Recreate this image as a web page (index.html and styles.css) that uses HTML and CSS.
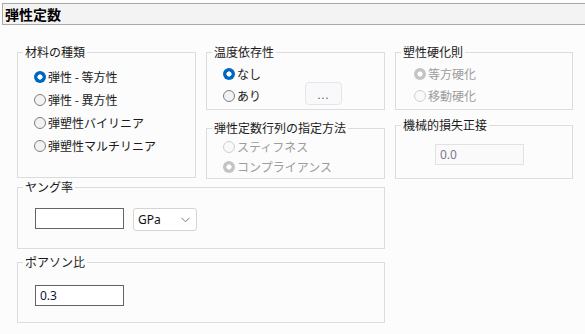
FILE: index.html
```html
<!DOCTYPE html>
<html lang="ja">
<head>
  <meta charset="UTF-8">
  <meta name="viewport" content="width=device-width, initial-scale=1.0">
  <title>弾性定数</title>
  <link rel="stylesheet" href="styles.css">
</head>
<body>
  <div class="title-bar">
    <h1>弾性定数</h1>
  </div>

  <div class="panel">
    <div class="top-row">
      <div class="col">
        <fieldset class="group group-material">
          <legend>材料の種類</legend>
          <div class="options">
            <label class="option"><input type="radio" name="material" checked>弾性 - 等方性</label>
            <label class="option"><input type="radio" name="material">弾性 - 異方性</label>
            <label class="option"><input type="radio" name="material">弾塑性バイリニア</label>
            <label class="option"><input type="radio" name="material">弾塑性マルチリニア</label>
          </div>
        </fieldset>
      </div>

      <div class="col">
        <fieldset class="group group-temp">
          <legend>温度依存性</legend>
          <div class="options">
            <label class="option"><input type="radio" name="temp" checked>なし</label>
            <div class="option">
              <label class="option-inline"><input type="radio" name="temp">あり</label>
              <button class="more-btn" type="button">...</button>
            </div>
          </div>
        </fieldset>
        <fieldset class="group group-matrix">
          <legend>弾性定数行列の指定方法</legend>
          <div class="options">
            <label class="option disabled"><input type="radio" name="matrix" disabled>スティフネス</label>
            <label class="option disabled"><input type="radio" name="matrix" checked disabled>コンプライアンス</label>
          </div>
        </fieldset>
      </div>

      <div class="col">
        <fieldset class="group group-hardening">
          <legend>塑性硬化則</legend>
          <div class="options">
            <label class="option disabled"><input type="radio" name="hardening" checked disabled>等方硬化</label>
            <label class="option disabled"><input type="radio" name="hardening" disabled>移動硬化</label>
          </div>
        </fieldset>
        <fieldset class="group group-loss">
          <legend>機械的損失正接</legend>
          <input class="text-input disabled-input" type="text" value="0.0" disabled>
        </fieldset>
      </div>
    </div>

    <fieldset class="group wide group-young">
      <legend>ヤング率</legend>
      <div class="field-row">
        <input class="text-input" type="text" value="">
        <div class="combo">
          <span>GPa</span>
          <svg width="9" height="6" viewBox="0 0 9 6"><path d="M0.5 0.8 L4.5 4.8 L8.5 0.8" fill="none" stroke="#777" stroke-width="1"/></svg>
        </div>
      </div>
    </fieldset>

    <fieldset class="group wide group-poisson">
      <legend>ポアソン比</legend>
      <div class="field-row">
        <input class="text-input" type="text" value="0.3">
      </div>
    </fieldset>
  </div>
</body>
</html>
```

FILE: styles.css
```css
body {
  margin: 0;
  background-color: #fbfcfb;
  font-family: "Noto Sans CJK JP", "Noto Sans", sans-serif;
  font-size: 12px;
  color: #1a1a1a;
}
.title-bar {
  margin: 3px 0 0 2px;
  height: 22px;
  box-sizing: border-box;
  border: 1px solid #a9a9a9;
  border-right: none;
  background-color: #f3f3f3;
}
.title-bar h1 {
  margin: 0;
  padding-left: 2px;
  font-size: 14px;
  font-weight: bold;
  line-height: 20px;
  color: #000;
}
.panel {
  padding: 20px 0 0 17px;
}
.top-row {
  display: flex;
  gap: 10px;
}
.col {
  display: flex;
  flex-direction: column;
}
.group {
  margin: 0;
  padding: 0;
  min-width: 0;
  box-sizing: border-box;
  border: 1px solid #dcdcdc;
}
.group legend {
  margin-left: 5px;
  padding: 0 2px;
  line-height: 14px;
  color: #1a1a1a;
}
.col:nth-child(1), .col:nth-child(2) {
  width: 179px;
}
.col:nth-child(3) {
  width: 178px;
}
.group-material {
  height: 133px;
}
.group-temp, .group-hardening {
  height: 65px;
}
.group-matrix {
  margin-top: 11px;
  height: 58px;
}
.group-loss {
  margin-top: 8px;
  height: 61px;
}
.options {
  padding-left: 16px;
}
.group-material .options {
  padding-top: 6px;
}
.group-material .option {
  height: 23px;
}
.group-temp .options, .group-hardening .options {
  padding-top: 4px;
}
.group-hardening .options {
  padding-left: 18px;
}
.group-temp .option, .group-hardening .option {
  height: 22px;
}
.group-matrix .options {
  padding-top: 2px;
}
.group-matrix .option {
  height: 20px;
}
.option, .option-inline {
  display: flex;
  align-items: center;
  line-height: 14px;
}
.option.disabled {
  color: #9d9d9d;
}
.option input[type="radio"] {
  appearance: none;
  -webkit-appearance: none;
  width: 12px;
  height: 12px;
  margin: 0 2px 0 0;
  box-sizing: border-box;
  border: 1px solid #7f7f7f;
  border-radius: 50%;
  background-color: #f2f2f2;
}
.option input[type="radio"]:checked {
  border: none;
  background: radial-gradient(circle, #fff 0 2.3px, #0067c0 2.9px);
}
.option input[type="radio"]:disabled {
  border-color: #cfcfcf;
  background-color: #f9f9f9;
}
.option input[type="radio"]:checked:disabled {
  border: none;
  background: radial-gradient(circle, #fff 0 2.3px, #c4c4c4 2.9px);
}
.more-btn {
  align-self: flex-start;
  margin: -3px 42px 0 auto;
  width: 37px;
  height: 23px;
  padding: 3px 0 0;
  border: 1px solid #e6e6e6;
  border-radius: 4px;
  background-color: #f9f8fb;
  color: #5a5a5a;
  font-family: "Noto Sans", sans-serif;
  font-size: 11px;
  letter-spacing: 1px;
  line-height: 16px;
}
.text-input {
  display: block;
  width: 89px;
  height: 21px;
  box-sizing: border-box;
  margin: 0;
  padding: 0 4px;
  border: 1px solid #646464;
  border-radius: 0;
  background-color: #fff;
  font-family: "Noto Sans", sans-serif;
  font-size: 12px;
  color: #10103a;
  outline: none;
}
.disabled-input {
  margin: 12px 0 0 39px;
  border-color: #e2e2e2;
  background-color: #fafafa;
  color: #7b7b8c;
}
.wide {
  width: 368px;
}
.group-young {
  margin-top: 1px;
  height: 69px;
}
.group-poisson {
  margin-top: 6px;
  height: 68px;
}
.field-row {
  display: flex;
  align-items: flex-start;
  padding-left: 17px;
}
.group-young .field-row {
  padding-top: 14px;
}
.group-poisson .field-row {
  padding-top: 16px;
}
.combo {
  display: flex;
  align-items: center;
  justify-content: space-between;
  margin-left: 9px;
  width: 64px;
  height: 23px;
  box-sizing: border-box;
  padding: 0 6px 0 4px;
  border: 1px solid #d4d4d4;
  border-radius: 3px;
  background-color: #fff;
  font-family: "Noto Sans", sans-serif;
  font-size: 12px;
  color: #111;
}
```
